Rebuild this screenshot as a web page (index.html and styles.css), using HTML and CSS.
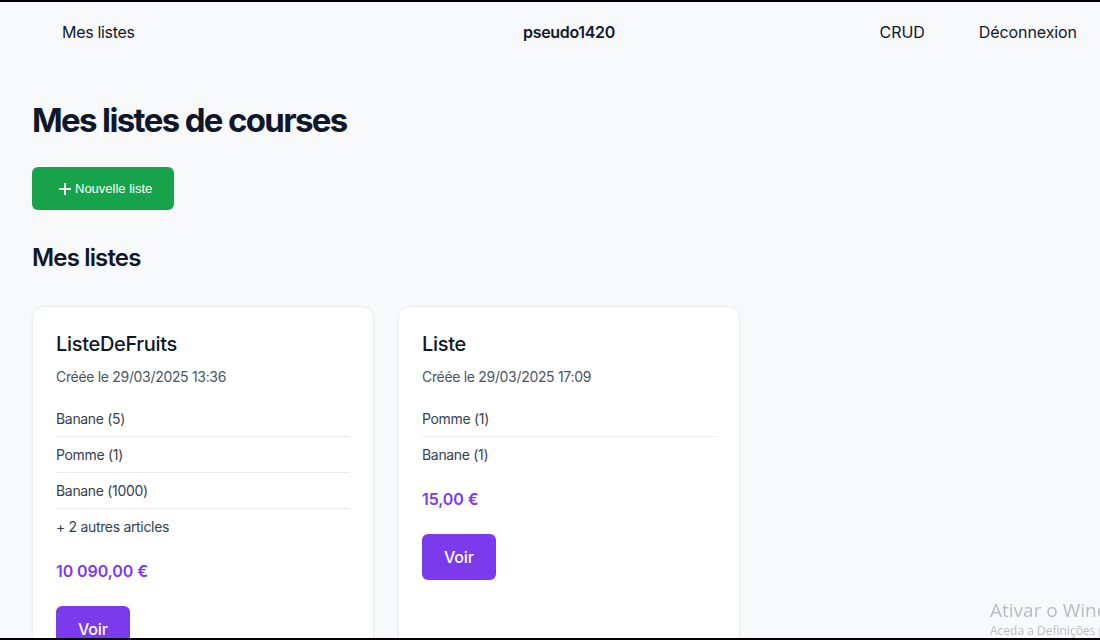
FILE: index.html
```html
<!DOCTYPE html>
<html lang="fr">
<head>
<meta charset="utf-8">
<title>Mes listes de courses</title>
<link rel="stylesheet" href="styles.css">
</head>
<body>
<div class="frame">
  <nav class="nav">
    <div class="nav-left"><a class="nav-link" href="#">Mes listes</a></div>
    <div class="nav-user">pseudo1420</div>
    <div class="nav-right">
      <a class="nav-link" href="#">CRUD</a>
      <a class="nav-link" href="#">Déconnexion</a>
    </div>
  </nav>
  <main class="main">
    <h1 class="title">Mes listes de courses</h1>
    <button class="btn-new" type="button">
      <svg class="plus" width="14" height="14" viewBox="0 0 14 14" aria-hidden="true"><path d="M7 1v12M1 7h12" stroke="#fff" stroke-width="1.8" fill="none"/></svg>
      <span>Nouvelle liste</span>
    </button>
    <h2 class="subtitle">Mes listes</h2>
    <div class="grid">
      <article class="card">
        <h3 class="card-title">ListeDeFruits</h3>
        <p class="card-date">Créée le 29/03/2025 13:36</p>
        <ul class="items">
          <li>Banane (5)</li>
          <li>Pomme (1)</li>
          <li>Banane (1000)</li>
          <li class="more">+ 2 autres articles</li>
        </ul>
        <p class="price">10 090,00 €</p>
        <button class="btn-voir" type="button">Voir</button>
      </article>
      <article class="card">
        <h3 class="card-title">Liste</h3>
        <p class="card-date">Créée le 29/03/2025 17:09</p>
        <ul class="items">
          <li>Pomme (1)</li>
          <li>Banane (1)</li>
        </ul>
        <p class="price">15,00 €</p>
        <button class="btn-voir" type="button">Voir</button>
      </article>
    </div>
  </main>
  <div class="watermark">
    <div class="wm-title">Ativar o Windows</div>
    <div class="wm-sub">Aceda a Definições para ativar o Windows.</div>
  </div>
</div>
</body>
</html>
```
FILE: styles.css
```css
* { box-sizing: border-box; }
html, body { margin: 0; padding: 0; }
body {
  background: #f8f9fb;
  font-family: "Inter", "Liberation Sans", sans-serif;
  color: #111827;
  letter-spacing: -0.02em;
}
.frame {
  height: 640px;
  overflow: hidden;
  border-top: 2px solid #000;
  border-bottom: 2px solid #000;
  background: #f8f9fb;
}
.nav {
  display: flex;
  align-items: center;
  height: 60px;
  padding: 0 23px 0 62px;
  font-size: 16px;
}
.nav-left { width: 461px; }
.nav-link { color: #111827; text-decoration: none; }
.nav-user { font-weight: 600; color: #111827; }
.nav-right { margin-left: auto; display: flex; gap: 54px; letter-spacing: -0.005em; }
.main { padding: 36px 32px 0; }
.title {
  margin: 0;
  font-size: 33px;
  line-height: 44px;
  font-weight: 700;
  color: #0f172a;
  letter-spacing: -0.05em;
}
.btn-new {
  margin-top: 25px;
  display: flex;
  align-items: center;
  gap: 3px;
  height: 43px;
  width: 142px;
  padding: 0 0 0 26px;
  border: none;
  border-radius: 6px;
  background: #17a34a;
  color: #fff;
  font-family: "Liberation Sans", Arial, sans-serif;
  font-size: 13px;
  letter-spacing: 0;
}
.subtitle {
  margin: 32px 0 0;
  font-size: 24px;
  line-height: 32px;
  font-weight: 600;
  color: #0f172a;
  letter-spacing: -0.035em;
}
.grid {
  margin-top: 32px;
  display: grid;
  grid-template-columns: 342px 342px;
  gap: 24px;
}
.card {
  background: #fff;
  border: 1px solid #edeef1;
  border-radius: 12px;
  box-shadow: 0 1px 3px rgba(15, 23, 42, 0.05);
  padding: 23px 23px 24px;
  height: 400px;
}
.card-title {
  margin: 0;
  font-size: 20px;
  line-height: 28px;
  font-weight: 500;
  color: #0f172a;
}
.card-date {
  margin: 9px 0 0;
  font-size: 14px;
  line-height: 20px;
  color: #4b5563;
}
.items {
  list-style: none;
  margin: 14px 0 0;
  padding: 0;
}
.items li {
  font-size: 14px;
  line-height: 19px;
  padding: 8px 0;
  color: #374151;
  border-bottom: 1px solid #e8eaee;
}
.items li:last-child { border-bottom: none; }
.price {
  margin: 15px 0 0;
  font-size: 16px;
  line-height: 24px;
  font-weight: 600;
  color: #7c3aed;
  letter-spacing: -0.005em;
}
.btn-voir {
  margin-top: 23px;
  height: 46px;
  padding: 0 22px;
  border: none;
  border-radius: 6px;
  background: #7c3aed;
  color: #fff;
  font-family: inherit;
  font-size: 16px;
  font-weight: 500;
  letter-spacing: -0.01em;
}
.watermark {
  position: fixed;
  left: 990px;
  top: 598px;
  white-space: nowrap;
  color: #b9bcc1;
  font-family: "Open Sans", "Noto Sans", sans-serif;
  letter-spacing: 0;
}
.wm-title { font-size: 19px; line-height: 24px; }
.wm-sub { font-size: 12px; line-height: 18px; }
```
